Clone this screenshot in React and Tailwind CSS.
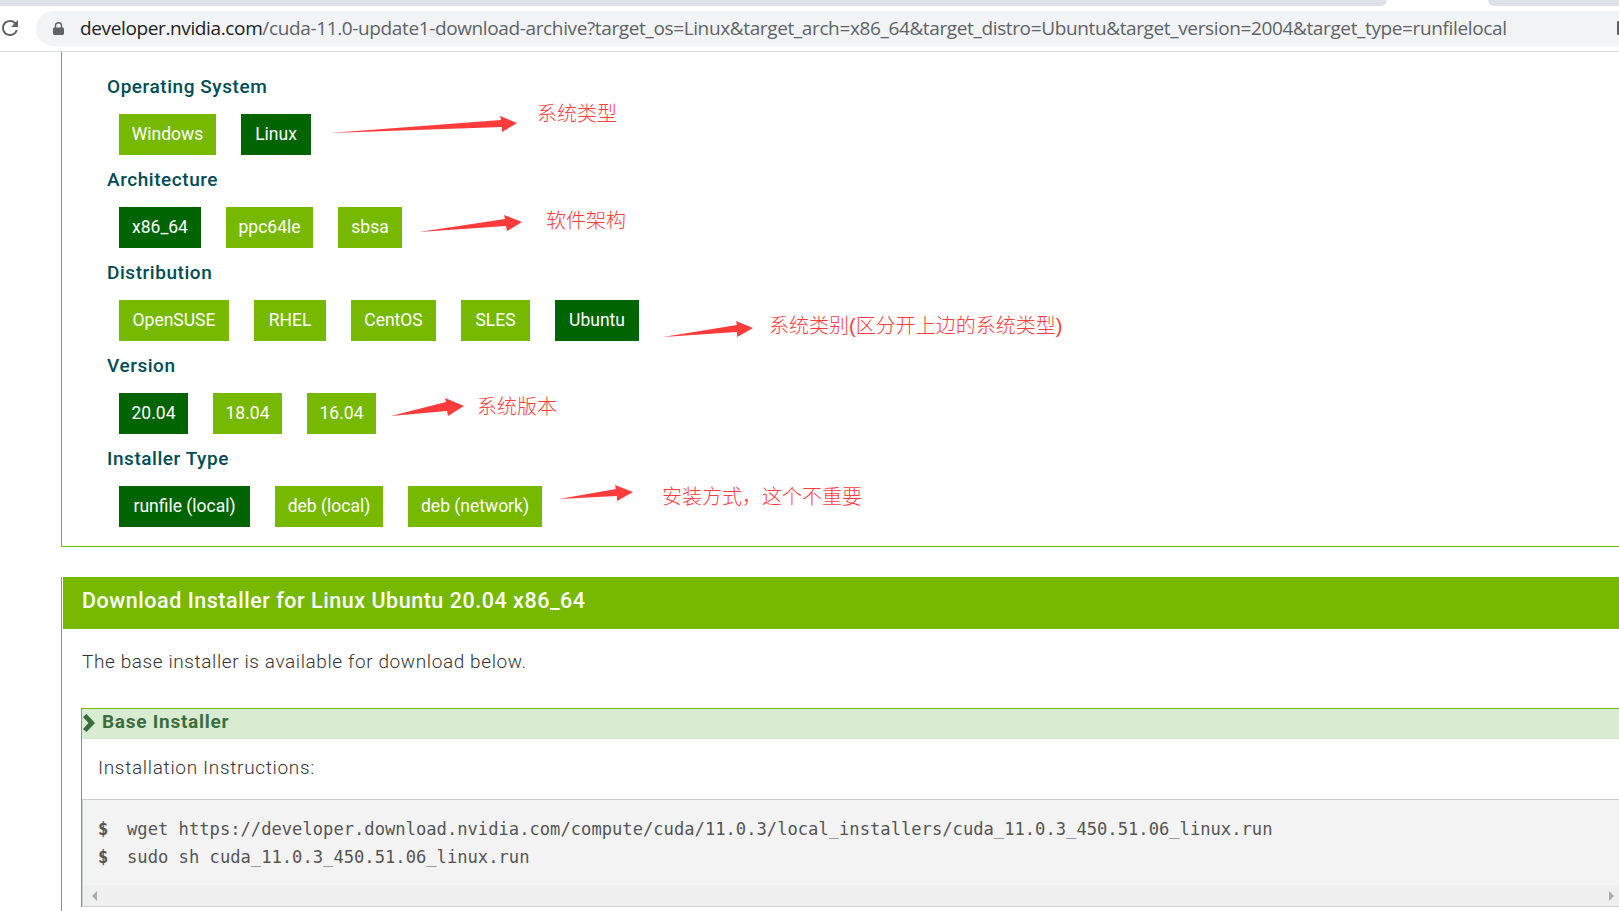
import React from 'react'

const din = { fontFamily: 'Roboto, sans-serif' }

const groups = [
  {
    title: 'Operating System',
    options: [
      { label: 'Windows', width: 'w-[97px]' },
      { label: 'Linux', width: 'w-[70px]', active: true },
    ],
  },
  {
    title: 'Architecture',
    options: [
      { label: 'x86_64', width: 'w-[82px]', active: true },
      { label: 'ppc64le', width: 'w-[87px]' },
      { label: 'sbsa', width: 'w-[64px]' },
    ],
  },
  {
    title: 'Distribution',
    options: [
      { label: 'OpenSUSE', width: 'w-[110px]' },
      { label: 'RHEL', width: 'w-[72px]' },
      { label: 'CentOS', width: 'w-[85px]' },
      { label: 'SLES', width: 'w-[69px]' },
      { label: 'Ubuntu', width: 'w-[84px]', active: true },
    ],
  },
  {
    title: 'Version',
    options: [
      { label: '20.04', width: 'w-[69px]', active: true },
      { label: '18.04', width: 'w-[69px]' },
      { label: '16.04', width: 'w-[69px]' },
    ],
  },
  {
    title: 'Installer Type',
    options: [
      { label: 'runfile (local)', width: 'w-[131px]', active: true },
      { label: 'deb (local)', width: 'w-[108px]' },
      { label: 'deb (network)', width: 'w-[134px]' },
    ],
  },
]

// red arrows painted on the screenshot: [tail, upper neck, upper barb, tip, lower barb, lower neck]
const arrows = [
  '330,133 501,120 500,116 517,123 502,132 502,127',
  '419,232 505,219 504,215 522,222 507,231 506,226',
  '663,337 737,325 736,321 753,328 737,337 737,332',
  '391,416 446,402 445,398 464,406 448,416 447,411',
  '559,499 616,489 615,485 633,492 617,501 617,496',
]

const notes = [
  { text: '系统类型', className: 'left-[537px] top-[100px]' },
  { text: '软件架构', className: 'left-[546px] top-[207px]' },
  { text: '系统类别(区分开上边的系统类型)', className: 'left-[769px] top-[312px]' },
  { text: '系统版本', className: 'left-[477px] top-[393px]' },
  { text: '安装方式，这个不重要', className: 'left-[662px] top-[483px]' },
]

function BrowserBar() {
  return (
    <div className="shrink-0">
      <div className="flex h-[6px] bg-white">
        <div className="w-[1387px] bg-[#dee1e6] rounded-br-[6px]" />
        <div className="flex-1" />
        <div className="w-[131px] bg-[#dee1e6] rounded-bl-[6px]" />
      </div>
      <div className="flex h-[46px] items-center border-b border-[#dadce0] bg-white pb-px">
        <svg viewBox="4 4 16 16" className="ml-[2px] h-4 w-4 fill-[#5f6368]">
          <path d="M17.65 6.35A7.958 7.958 0 0012 4c-4.42 0-7.99 3.58-7.99 8s3.57 8 7.99 8c3.73 0 6.84-2.55 7.73-6h-2.08A5.99 5.99 0 0112 18c-3.31 0-6-2.69-6-6s2.69-6 6-6c1.66 0 3.14.69 4.22 1.78L13 11h7V4l-2.35 2.35z" />
        </svg>
        <div className="ml-[18px] flex h-[35px] flex-1 items-center rounded-l-full bg-[#f1f3f4]">
          <svg viewBox="0 0 12 14" className="ml-[17px] h-[13px] w-[11px] fill-[#5f6368]">
            <path d="M2 6V4a4 4 0 018 0v2h.5A1.5 1.5 0 0112 7.5v5a1.5 1.5 0 01-1.5 1.5h-9A1.5 1.5 0 010 12.5v-5A1.5 1.5 0 011.5 6H2zm1.5 0h5V4a2.5 2.5 0 00-5 0v2z" />
          </svg>
          <span
            className="ml-[16px] whitespace-nowrap text-[19px] leading-none tracking-[-0.37px] text-[#5f6368]"
            style={{ fontFamily: '"Open Sans", sans-serif' }}
          >
            <span className="text-[#202124]">developer.nvidia.com</span>
            /cuda-11.0-update1-download-archive?target_os=Linux&amp;target_arch=x86_64&amp;target_distro=Ubuntu&amp;target_version=2004&amp;target_type=runfilelocal
          </span>
          <div className="ml-auto h-[14px] w-[2px] rounded-l-[1px] bg-[#5f6368]" />
        </div>
      </div>
    </div>
  )
}

function Selector() {
  return (
    <section className="h-[495px] border-b border-l border-[#76b900] pl-[57px] pt-[10px]" style={din}>
      {groups.map((group) => (
        <div key={group.title}>
          <h4 className="-ml-[12px] flex h-[52px] items-center pb-[1px] text-[19px] font-medium tracking-[0.55px] text-[#004d55]">
            {group.title}
          </h4>
          <div className="flex gap-[25px]">
            {group.options.map((opt) => (
              <div
                key={opt.label}
                className={`flex h-[41px] items-center justify-center whitespace-nowrap text-[17.5px] text-white ${opt.width} ${
                  opt.active ? 'bg-[#006400]' : 'bg-[#76b900]'
                }`}
              >
                {opt.label}
              </div>
            ))}
          </div>
        </div>
      ))}
    </section>
  )
}

function Download() {
  return (
    <section className="mt-[30px] flex-1 border-l border-[#76b900] pl-px" style={din}>
      <h3 className="flex h-[52px] items-center bg-[#76b900] pb-[4px] pl-[19px] text-[21.5px] font-medium tracking-[0.53px] text-white">
        Download Installer for Linux Ubuntu 20.04 x86_64
      </h3>
      <p className="flex h-[79px] items-center pb-[13px] pl-[19px] text-[19px] font-light tracking-[0.6px] text-[#333333]">
        The base installer is available for download below.
      </p>
      <div className="ml-[18px] border-l border-t border-[#76b900]">
        <div className="flex h-[30px] items-center bg-[#d9ebd0] pb-[3px]">
          <svg viewBox="0 0 12 18" className="ml-px h-[18px] w-3 fill-[#3a6e41]">
            <path d="M3.5 0L12 9l-8.500 9L0 15l5.500-6L0 3z" />
          </svg>
          <span className="ml-[7px] text-[19px] font-bold tracking-[0.74px] text-[#3a6e41]">Base Installer</span>
        </div>
        <p className="flex h-[60px] items-center pb-[2px] pl-[16px] text-[19px] font-light tracking-[0.68px] text-[#333333]">
          Installation Instructions:
        </p>
        <div className="border-l border-t border-[#cccccc] bg-[#f3f3f3]">
          <div
            className="h-[85px] whitespace-nowrap pl-[15px] pt-[15px] text-[17.15px] leading-[28px] text-[#555555]"
            style={{ fontFamily: '"DejaVu Sans Mono", monospace' }}
          >
            <div className="flex">
              <span className="w-[29px] font-bold">$</span>
              <span>wget https://developer.download.nvidia.com/compute/cuda/11.0.3/local_installers/cuda_11.0.3_450.51.06_linux.run</span>
            </div>
            <div className="flex">
              <span className="w-[29px] font-bold">$</span>
              <span>sudo sh cuda_11.0.3_450.51.06_linux.run</span>
            </div>
          </div>
          <div className="flex h-[22px] items-center justify-between border-b border-[#cccccc] bg-[#efefef] pl-[9px] pr-[5px]">
            <div className="h-0 w-0 border-y-[5px] border-r-[5px] border-y-transparent border-r-[#aaaaaa]" />
            <div className="h-0 w-0 border-y-[5px] border-l-[5px] border-y-transparent border-l-[#aaaaaa]" />
          </div>
        </div>
      </div>
    </section>
  )
}

export default function App() {
  return (
    <div className="relative flex h-[911px] w-[1619px] flex-col overflow-hidden bg-white">
      <BrowserBar />
      <main className="flex flex-1 flex-col pl-[61px]">
        <Selector />
        <Download />
      </main>

      {/* annotations drawn over the page */}
      <svg viewBox="0 0 1619 911" className="pointer-events-none absolute left-0 top-0 h-[911px] w-[1619px] fill-[#ff3b3b]">
        {arrows.map((points) => (
          <polygon key={points} points={points} />
        ))}
      </svg>
      {notes.map((note) => (
        <span
          key={note.text}
          className={`absolute whitespace-nowrap text-[20px] font-light leading-[28px] text-[#ff3b3b] ${note.className}`}
          style={{ fontFamily: '"Liberation Sans", "Noto Sans CJK SC", sans-serif' }}
        >
          {note.text}
        </span>
      ))}
    </div>
  )
}
